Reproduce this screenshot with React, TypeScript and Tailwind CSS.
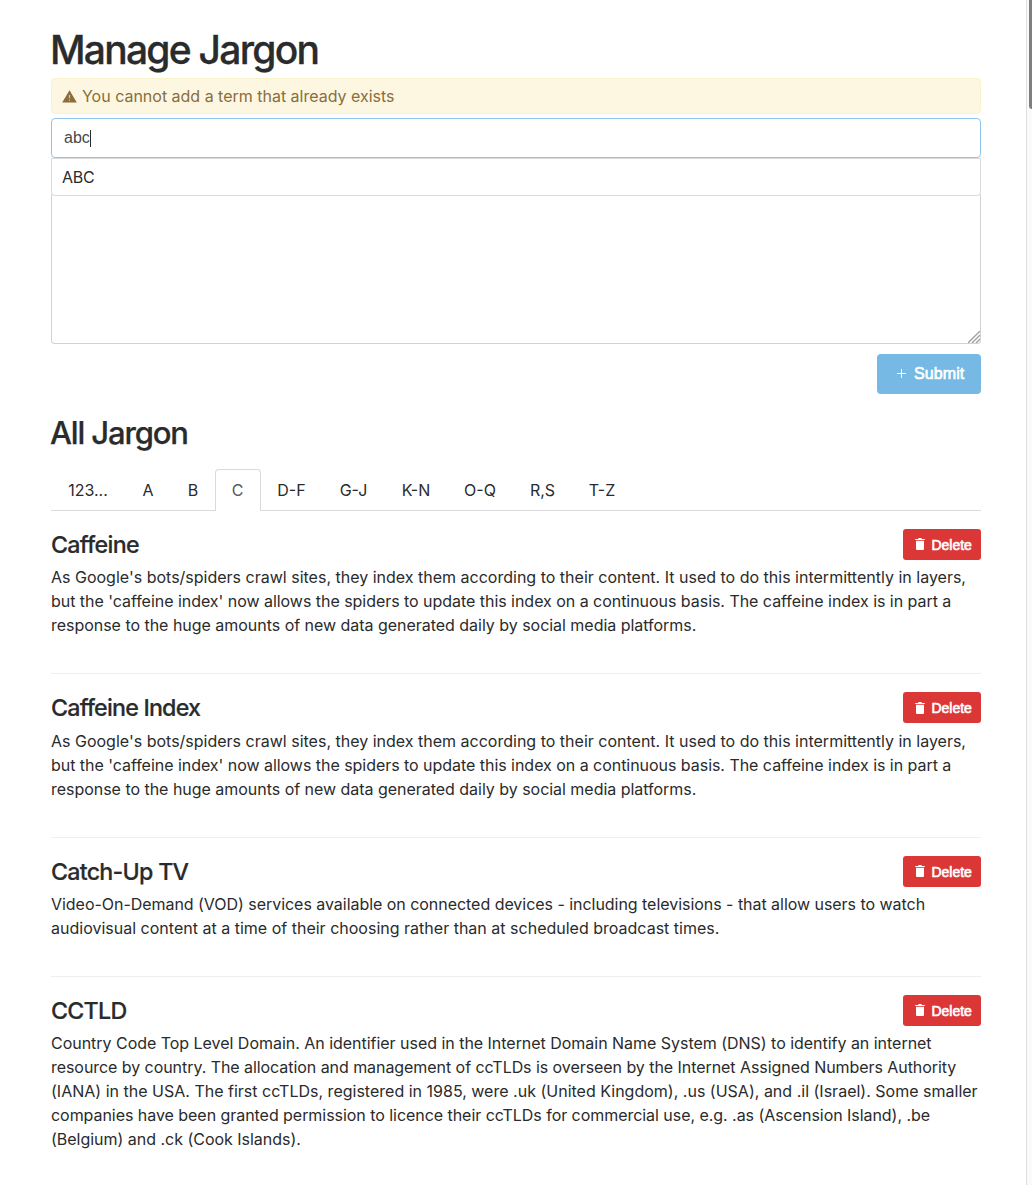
type Line = { text: string; tracking: string };
type Term = { name: string; tracking: string; lines: Line[] };

const caffeineLines: Line[] = [
  { text: "As Google's bots/spiders crawl sites, they index them according to their content. It used to do this intermittently in layers,", tracking: 'tracking-[0.002px]' },
  { text: "but the 'caffeine index' now allows the spiders to update this index on a continuous basis. The caffeine index is in part a", tracking: 'tracking-[-0.038px]' },
  { text: 'response to the huge amounts of new data generated daily by social media platforms.', tracking: 'tracking-[-0.028px]' },
];

const terms: Term[] = [
  { name: 'Caffeine', tracking: 'tracking-[-0.7px]', lines: caffeineLines },
  { name: 'Caffeine Index', tracking: 'tracking-[-0.81px]', lines: caffeineLines },
  {
    name: 'Catch-Up TV',
    tracking: 'tracking-[-0.75px]',
    lines: [
      { text: 'Video-On-Demand (VOD) services available on connected devices - including televisions - that allow users to watch', tracking: 'tracking-[-0.038px]' },
      { text: 'audiovisual content at a time of their choosing rather than at scheduled broadcast times.', tracking: 'tracking-[0.006px]' },
    ],
  },
  {
    name: 'CCTLD',
    tracking: 'tracking-[-0.75px]',
    lines: [
      { text: 'Country Code Top Level Domain. An identifier used in the Internet Domain Name System (DNS) to identify an internet', tracking: 'tracking-[-0.028px]' },
      { text: 'resource by country. The allocation and management of ccTLDs is overseen by the Internet Assigned Numbers Authority', tracking: 'tracking-[-0.058px]' },
      { text: '(IANA) in the USA. The first ccTLDs, registered in 1985, were .uk (United Kingdom), .us (USA), and .il (Israel). Some smaller', tracking: 'tracking-[0.006px]' },
      { text: 'companies have been granted permission to licence their ccTLDs for commercial use, e.g. .as (Ascension Island), .be', tracking: 'tracking-[-0.046px]' },
      { text: '(Belgium) and .ck (Cook Islands).', tracking: 'tracking-[-0.02px]' },
    ],
  },
];

const tabs = [
  { label: '123...', width: 'w-[74px]' },
  { label: 'A', width: 'w-[46px]' },
  { label: 'B', width: 'w-[44px]' },
  { label: 'C', width: 'w-[46px]', active: true },
  { label: 'D-F', width: 'w-[61px]' },
  { label: 'G-J', width: 'w-[63px]' },
  { label: 'K-N', width: 'w-[62px]' },
  { label: 'O-Q', width: 'w-[66px]' },
  { label: 'R,S', width: 'w-[59px]' },
  { label: 'T-Z', width: 'w-[60px]' },
];

function WarningIcon() {
  return (
    <svg className="h-[13px] w-[15px]" viewBox="0 0 15 13">
      <path d="M7.5 0.2 L14.8 12.4 H0.2 Z" fill="#8a6d3b" />
      <path d="M6.9 5h1.2v3.2H6.9zM6.9 9.4h1.2v1.4H6.9z" fill="#d9caa0" />
    </svg>
  );
}

function TrashIcon() {
  return (
    <svg className="h-3 w-[10px]" viewBox="0 0 10 12" fill="#fff">
      <path d="M0.2 0.9H3L3.6 0.1H6.4L7 0.9H9.8V2H0.2Z" />
      <path d="M1 2.8H9V10.9Q9 12 7.9 12H2.1Q1 12 1 10.9Z" />
    </svg>
  );
}

function DeleteButton() {
  return (
    <button className="flex h-[31px] w-[78px] shrink-0 items-center rounded-[3px] bg-[#dc3737] pl-[11.5px] font-['Liberation_Sans',sans-serif] text-sm text-white">
      <TrashIcon />
      <span className="mt-[1.4px] ml-[6.9px] leading-5 [-webkit-text-stroke:0.6px_white]">Delete</span>
    </button>
  );
}

function TermEntry({ term, last }: { term: Term; last: boolean }) {
  return (
    <article className={last ? '' : 'mb-[18px] border-b border-[#eceeef] pb-9'}>
      <div className="mb-[5.4px] flex h-[31px] items-center justify-between">
        <h3 className={`text-[23.25px] leading-[31px] font-medium whitespace-nowrap [-webkit-text-stroke:0.2px_#292b2c] ${term.tracking}`}>{term.name}</h3>
        <DeleteButton />
      </div>
      {term.lines.map((line) => (
        <p key={line.text} className={`leading-6 whitespace-nowrap ${line.tracking}`}>{line.text}</p>
      ))}
    </article>
  );
}

export default function App() {
  return (
    <div className="flex h-[1185px] overflow-hidden bg-white font-['Inter',sans-serif] text-base text-[#292b2c]">
      <main className="w-[1026px] shrink-0 pr-[45px] pl-[51px]">
        <h1 className="-ml-px mt-[26px] h-[52px] text-[39px] leading-[48px] font-medium tracking-[-1.75px] whitespace-nowrap [-webkit-text-stroke:0.3px_#292b2c]">Manage Jargon</h1>
        <div className="flex h-9 items-center rounded-[4px] border border-[#faf2cc] bg-[#fdf7e2] pl-[10px] text-[#8a6d3b]">
          <WarningIcon />
          <span className="ml-[5px] tracking-[-0.01px]">You cannot add a term that already exists</span>
        </div>
        <div className="mt-1 flex h-10 items-center rounded-[4px] border border-[#8fc6e9] pl-3 font-['Liberation_Sans',sans-serif] text-[#464a4c]">
          <span>abc</span>
          <span className="h-[17px] w-px bg-[#292b2c]" />
        </div>
        <div className="flex h-[38px] items-center rounded-b-[4px] border border-[#d9d9d9] pl-[10px]">
          <span className="tracking-[-0.3px]">ABC</span>
        </div>
        <div className="-mt-[2px] flex h-[150px] items-end justify-end rounded-b-[4px] border border-t-0 border-[#d2d2d2]">
          <svg className="size-3" viewBox="0 0 12 12" stroke="#a0a0a0" strokeWidth="1.4">
            <path d="M0 12L12 0M4 12L12 4M8 12L12 8" />
          </svg>
        </div>
        <div className="mt-[10px] flex justify-end">
          <button className="flex h-10 w-[104px] items-center rounded-[4px] bg-[#75b9e4] pl-5 font-['Liberation_Sans',sans-serif] text-base text-white">
            <svg className="size-[10px]" viewBox="0 0 10 10" stroke="#fff"><path d="M0 4.5H9M4.5 0V9" /></svg>
            <span className="ml-[7px] tracking-[0.1px] [-webkit-text-stroke:0.6px_white]">Submit</span>
          </button>
        </div>
        <h2 className="-ml-px mt-5 h-[55px] text-[31px] leading-[38px] font-medium tracking-[-1.15px] whitespace-nowrap [-webkit-text-stroke:0.25px_#292b2c]">All Jargon</h2>
        <nav className="flex h-[42px] border-b border-[#d9dadb]">
          {tabs.map((tab) => (
            <div
              key={tab.label}
              className={`flex h-[42px] items-center justify-center ${tab.width} ${tab.active ? 'rounded-t-[4px] border border-b-0 border-[#d9dadb] bg-white pr-px pb-px text-[#55595c]' : ''}`}
            >
              {tab.label}
            </div>
          ))}
        </nav>
        <section className="pt-[17.8px]">
          {terms.map((term, i) => (
            <TermEntry key={term.name} term={term} last={i === terms.length - 1} />
          ))}
        </section>
      </main>
      <div className="w-[6px] shrink-0 border-l border-[#dfdfdf] bg-[#fafafa] pl-[2px]">
        <div className="h-[109px] rounded-bl-[4px] bg-[#7f7f7f]" />
      </div>
    </div>
  );
}
